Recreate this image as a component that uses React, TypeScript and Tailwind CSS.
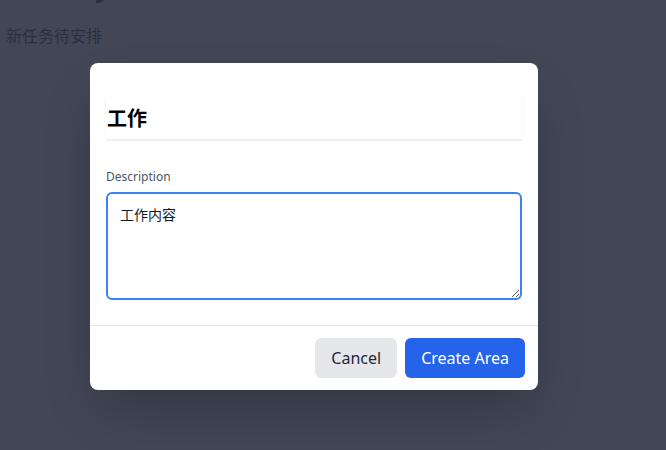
import { useState } from "react";

export default function App() {
  const [title, setTitle] = useState("工作");
  const [desc, setDesc] = useState("工作内容");

  return (
    <div
      className="relative h-[450px] w-[666px] overflow-hidden bg-white"
      style={{ fontFamily: '"Noto Sans", "Noto Sans CJK SC", sans-serif' }}
    >
      <div className="px-[6px] text-[#111827]">
        <h1 className="-mt-[33px] text-3xl font-semibold">Weekly</h1>
        <p className="mt-[20px] text-base" style={{ fontFamily: '"Noto Sans CJK SC", sans-serif' }}>
          新任务待安排
        </p>
      </div>

      <div className="absolute inset-0 flex items-center justify-center bg-[#2d3242]/90 pt-[2px] pr-[38px]">
        <div className="w-[448px] rounded-lg bg-white shadow-2xl">
          <div className="px-4 pt-[34px] pb-[25px]">
            <input
              value={title}
              onChange={(e) => setTitle(e.target.value)}
              className="h-[42px] w-full border-0 bg-white px-[1px] text-xl font-bold text-black shadow-[0_2px_2px_rgba(0,0,0,0.08)] outline-none"
              style={{ fontFamily: '"Noto Sans CJK SC", sans-serif' }}
            />
            <label className="mt-[30px] block text-xs text-gray-600">Description</label>
            <textarea
              value={desc}
              onChange={(e) => setDesc(e.target.value)}
              className="mt-[7px] block h-[108px] w-full rounded-md border-2 border-[#3b82f6] px-3 py-[10px] text-sm text-gray-900 outline-none"
              style={{ fontFamily: '"Noto Sans CJK SC", sans-serif' }}
            />
          </div>
          <div className="flex justify-end gap-2 border-t border-gray-200 px-[13px] pt-3 pb-3">
            <button className="h-10 rounded-md bg-gray-200 px-4 text-base text-gray-800">Cancel</button>
            <button className="h-10 rounded-md bg-[#2563eb] px-4 text-base text-white">Create Area</button>
          </div>
        </div>
      </div>
    </div>
  );
}
